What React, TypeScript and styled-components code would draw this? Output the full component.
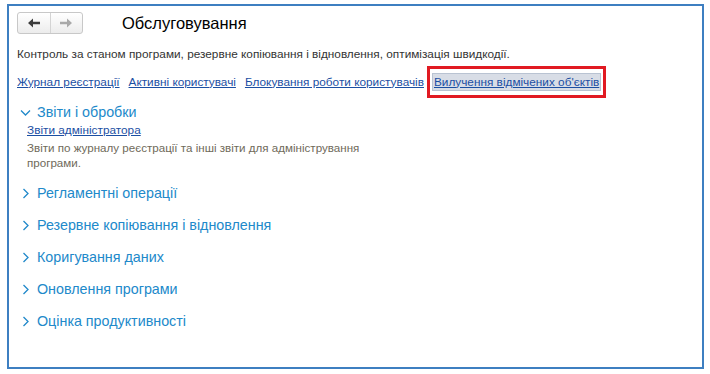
import styled, { createGlobalStyle } from 'styled-components';

const GlobalStyle = createGlobalStyle`
  html, body {
    margin: 0;
    padding: 0;
    background: #ffffff;
  }
  body {
    font-family: 'Liberation Sans', Arial, sans-serif;
  }
`;

const Page = styled.div`
  width: 710px;
  height: 374px;
  box-sizing: border-box;
  padding: 4px 6px 5px 7px;
`;

const Frame = styled.div`
  height: 100%;
  box-sizing: border-box;
  border: 2px solid #3e7fc1;
  padding: 5px 10px 0 8px;
`;

const Header = styled.div`
  display: flex;
  align-items: center;
  height: 24px;
`;

const NavButtons = styled.div`
  display: flex;
  width: 66px;
  height: 22px;
  border: 1px solid #c8c8c8;
  border-radius: 3px;
  background: linear-gradient(#ffffff, #ececec);
  box-sizing: border-box;
`;

const NavButton = styled.div<{ $disabled?: boolean }>`
  flex: 1;
  display: flex;
  align-items: center;
  justify-content: center;
  color: ${(p) => (p.$disabled ? '#a9a9a9' : '#3c3c3c')};
  & + & {
    border-left: 1px solid #d4d4d4;
  }
`;

const Title = styled.h1`
  margin: 0 0 0 39px;
  font-size: 16.5px;
  font-weight: normal;
  color: #000;
`;

const Description = styled.p`
  margin: 12px 0 0;
  font-size: 11.8px;
  color: #333;
`;

const Links = styled.div`
  display: flex;
  align-items: center;
  gap: 9px;
  margin-top: 6px;
  height: 29px;
`;

const Link = styled.a`
  font-size: 11.8px;
  color: #1b4fa3;
  text-decoration: underline;
  cursor: pointer;
`;

const Highlighted = styled.span`
  border: 3px solid #e11a22;
  padding: 4px 2px;
  display: inline-flex;
  margin-left: -6px;
  & > a {
    background: #d8dde6;
    border: 1px solid #b9c3d2;
    padding: 1px 1px;
  }
`;

const GroupHead = styled.div`
  display: flex;
  align-items: center;
  height: 32px;
  color: #2189ca;
  font-size: 14.3px;
  padding-left: 3px;
  gap: 6px;
`;

const GroupBody = styled.div`
  padding-left: 10px;
  margin-top: -5px;
  padding-bottom: 7px;
`;

const SubLink = styled(Link)`
  display: block;
`;

const SubText = styled.div`
  font-size: 11.6px;
  color: #6f6a5a;
  width: 345px;
  margin-top: 3px;
  line-height: 15px;
`;

function Chevron({ open }: { open?: boolean }) {
  return (
    <svg width="11" height="11" viewBox="0 0 11 11" fill="none" stroke="#2189ca" strokeWidth="1.3">
      {open ? <path d="M1 3.5 L5.5 8 L10 3.5" /> : <path d="M3.5 1 L8 5.5 L3.5 10" />}
    </svg>
  );
}

function Arrow({ dir }: { dir: 'left' | 'right' }) {
  return (
    <svg width="12" height="10" viewBox="0 0 12 10" fill="currentColor">
      {dir === 'left' ? (
        <path d="M0 5 L5 0.5 L5 3.8 L12 3.8 L12 6.2 L5 6.2 L5 9.5 Z" />
      ) : (
        <path d="M12 5 L7 0.5 L7 3.8 L0 3.8 L0 6.2 L7 6.2 L7 9.5 Z" />
      )}
    </svg>
  );
}

const groups = [
  'Регламентні операції',
  'Резервне копіювання і відновлення',
  'Коригування даних',
  'Оновлення програми',
  'Оцінка продуктивності',
];

export default function App() {
  return (
    <>
      <GlobalStyle />
      <Page>
        <Frame>
          <Header>
            <NavButtons>
              <NavButton><Arrow dir="left" /></NavButton>
              <NavButton $disabled><Arrow dir="right" /></NavButton>
            </NavButtons>
            <Title>Обслуговування</Title>
          </Header>
          <Description>
            Контроль за станом програми, резервне копіювання і відновлення, оптимізація швидкодії.
          </Description>
          <Links>
            <Link>Журнал реєстрації</Link>
            <Link>Активні користувачі</Link>
            <Link>Блокування роботи користувачів</Link>
            <Highlighted>
              <Link>Вилучення відмічених об'єктів</Link>
            </Highlighted>
          </Links>
          <div>
            <GroupHead>
              <Chevron open />
              Звіти і обробки
            </GroupHead>
            <GroupBody>
              <SubLink>Звіти адміністратора</SubLink>
              <SubText>
                Звіти по журналу реєстрації та інші звіти для адміністрування програми.
              </SubText>
            </GroupBody>
          </div>
          {groups.map((g) => (
            <GroupHead key={g}>
              <Chevron />
              {g}
            </GroupHead>
          ))}
        </Frame>
      </Page>
    </>
  );
}
